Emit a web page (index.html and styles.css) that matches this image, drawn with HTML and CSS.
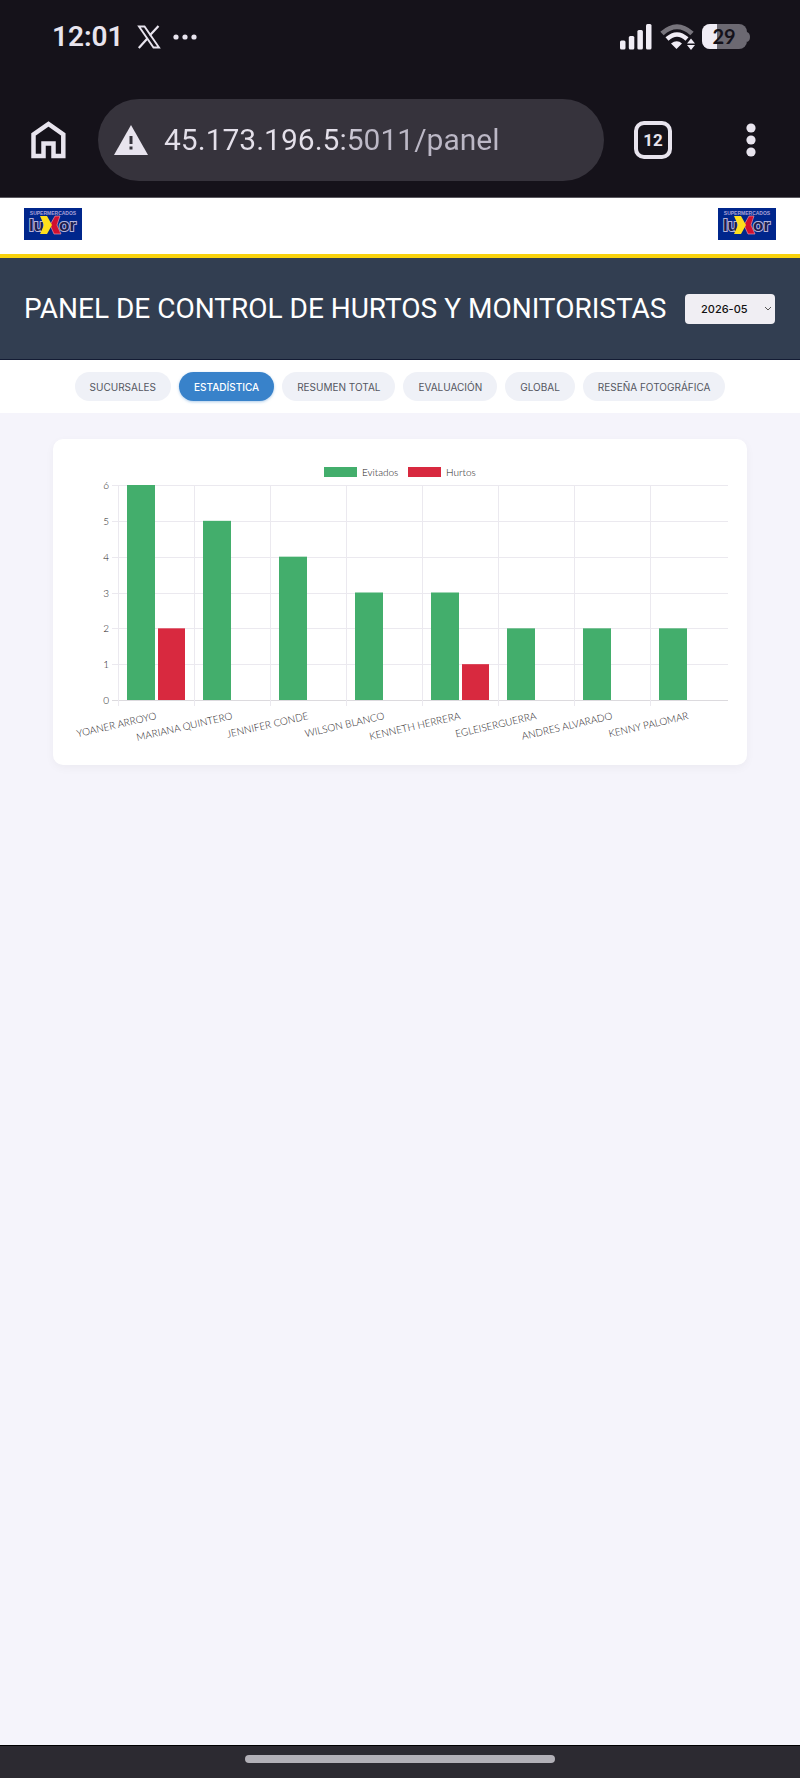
FILE: index.html
```
<!DOCTYPE html>
<html lang="es">
<head>
	<meta charset="UTF-8">
	<meta name="viewport" content="width=device-width, initial-scale=1">
	<title>Panel de control</title>
	<link rel="stylesheet" href="styles.css">
</head>
<body>
	<div class="status">
		<span class="clock">12:01</span>
		<svg class="x-icon" width="24" height="24" viewBox="0 0 24 24">
			<path fill="none" stroke="#e8e4ee" stroke-width="1.9" d="M2 1.500h5.500L22 22.500h-5.500z"/>
			<path fill="none" stroke="#e8e4ee" stroke-width="2.200" d="M21.500 1l-8.800 9.600M10.600 13.200L1.800 23"/>
		</svg>
		<svg width="24" height="6" viewBox="0 0 24 6">
			<g fill="#e8e4ee"><circle cx="3" cy="3" r="2.600"/><circle cx="12" cy="3" r="2.600"/><circle cx="21" cy="3" r="2.600"/></g>
		</svg>
		<svg class="signal" width="32" height="26" viewBox="0 0 32 26">
			<g fill="#f0ecf5">
				<rect y="16.500" width="5.500" height="9" rx="1.500"/><rect x="8.800" y="12" width="5.500" height="13.500" rx="1.500"/>
				<rect x="17.400" y="6" width="5.500" height="19.500" rx="1.500"/><rect x="26" y="0" width="5.500" height="25.500" rx="1.500"/>
			</g>
		</svg>
		<svg class="wifi" width="36" height="26" viewBox="0 0 36 26">
			<path d="M2 9.500Q17 -4 32 9.500" fill="none" stroke="#77747c" stroke-width="5"/>
			<path d="M7 15Q17 6 27 15" fill="none" stroke="#f0ecf5" stroke-width="4.500"/>
			<path d="M11 19.500q6-4.500 11 0L16.500 25z" fill="#f0ecf5"/>
			<path d="M31 14.500l4 5h-8zM31 26l4-5h-8z" fill="#f0ecf5"/>
		</svg>
		<svg class="battery" width="48" height="26" viewBox="0 0 48 26">
			<clipPath id="cell"><rect width="45" height="25" rx="8"/></clipPath>
			<g clip-path="url(#cell)"><rect width="45" height="25" fill="#6c6972"/><rect width="15" height="25" fill="#f0ecf5"/></g>
			<path d="M45 8q3 1 3 5t-3 5z" fill="#6c6972"/>
			<text x="22" y="20" text-anchor="middle">29</text>
		</svg>
	</div>

	<div class="toolbar">
		<button class="icon-btn" aria-label="Inicio">
			<svg width="36" height="38" viewBox="0 0 36 38">
				<path d="M2.500 35V13.500L17.500 3l14.800 10.500V35H22.500V22.500h-10V35z" fill="none" stroke="#e8e4ee" stroke-width="4.500"/>
			</svg>
		</button>
		<label class="address">
			<svg width="34" height="30" viewBox="0 0 34 30">
				<path d="M17 0l17 30H0z" fill="#e8e4ee"/>
				<path d="M17 11v8M17 21.500v3" stroke="#35323b" stroke-width="3"/>
			</svg>
			<input type="text" value="45.173.196.5:5011/panel" aria-label="Dirección">
		</label>
		<button class="tabs-count" aria-label="Pestañas">12</button>
		<button class="icon-btn menu" aria-label="Menú">
			<svg width="10" height="34" viewBox="0 0 10 34">
				<g fill="#e8e4ee"><circle cx="5" cy="5" r="4.600"/><circle cx="5" cy="17" r="4.600"/><circle cx="5" cy="29" r="4.600"/></g>
			</svg>
		</button>
	</div>

	<div class="brand">
		<svg class="logo" viewBox="0 0 58 32">
			<rect width="58" height="32" fill="#00268c"/>
			<text x="29" y="7" class="logo-small" text-anchor="middle">SUPERMERCADOS</text>
			<text x="5" y="23" class="logo-big">lu</text>
			<text x="52" y="23" class="logo-big" text-anchor="end">or</text>
			<path d="M36 8h-5l-5 9 4 9h7l-4-9z" fill="#d01030" stroke="#f3a9b8" stroke-width=".6"/>
			<path d="M16 8h7l5 9-5 9h-7l4-9z" fill="#ffdf1c"/>
		</svg>
		<svg class="logo" viewBox="0 0 58 32">
			<rect width="58" height="32" fill="#00268c"/>
			<text x="29" y="7" class="logo-small" text-anchor="middle">SUPERMERCADOS</text>
			<text x="5" y="23" class="logo-big">lu</text>
			<text x="52" y="23" class="logo-big" text-anchor="end">or</text>
			<path d="M36 8h-5l-5 9 4 9h7l-4-9z" fill="#d01030" stroke="#f3a9b8" stroke-width=".6"/>
			<path d="M16 8h7l5 9-5 9h-7l4-9z" fill="#ffdf1c"/>
		</svg>
	</div>

	<header class="title-bar">
		<h1>PANEL DE CONTROL DE HURTOS Y MONITORISTAS</h1>
		<div class="month">
			<select aria-label="Mes"><option>2026-05</option></select>
			<svg width="8" height="6" viewBox="0 0 8 6"><path d="M1 1l3 3 3-3" fill="none" stroke="#555" stroke-width="1"/></svg>
		</div>
	</header>

	<nav class="nav">
		<button>SUCURSALES</button>
		<button class="active">ESTADÍSTICA</button>
		<button>RESUMEN TOTAL</button>
		<button>EVALUACIÓN</button>
		<button>GLOBAL</button>
		<button>RESEÑA FOTOGRÁFICA</button>
	</nav>

	<main>
		<section class="card">
			<svg id="chart" viewBox="0 0 654 286" role="img" aria-label="Evitados y hurtos por monitorista"></svg>
		</section>
	</main>

	<div class="gesture"><span></span></div>

<script>
	var data = [
		['YOANER ARROYO', 6, 2],
		['MARIANA QUINTERO', 5, 0],
		['JENNIFER CONDE', 4, 0],
		['WILSON BLANCO', 3, 0],
		['KENNETH HERRERA', 3, 1],
		['EGLEISERGUERRA', 2, 0],
		['ANDRES ALVARADO', 2, 0],
		['KENNY PALOMAR', 2, 0]
	];
	var left = 45, right = 655, top0 = 26, bottom = 241, max = 6;
	var step = 76;
	var unit = (bottom - top0) / max;
	var out = '';

	// leyenda
	out += '<rect class="green" x="251" y="8" width="33" height="10"/><text x="289" y="17">Evitados</text>';
	out += '<rect class="red" x="335" y="8" width="33" height="10"/><text x="373" y="17">Hurtos</text>';

	// eje y
	for (var i = 0; i <= max; i++) {
		var y = Math.round(bottom - i * unit);
		out += '<path class="' + (i ? 'grid' : 'grid base') + '" d="M' + (left - 6) + ' ' + (y + 0.5) + 'H' + right + '"/>';
		out += '<text x="36" y="' + (y + 4) + '" text-anchor="end">' + i + '</text>';
	}

	// barras y nombres
	data.forEach(function (row, n) {
		var x = left + n * step;
		out += '<path class="grid" d="M' + (x + 0.5) + ' ' + top0 + 'V' + (bottom + 6) + '"/>';
		out += '<rect class="green" x="' + (x + 9) + '" y="' + (bottom - row[1] * unit) + '" width="28" height="' + row[1] * unit + '"/>';
		out += '<rect class="red" x="' + (x + 40) + '" y="' + (bottom - row[2] * unit) + '" width="27" height="' + row[2] * unit + '"/>';
		out += '<text text-anchor="end" transform="translate(' + (x + 39) + ' 260) rotate(-13)">' + row[0] + '</text>';
	});
	document.getElementById('chart').innerHTML = out;
</script>
</body>
</html>
```
FILE: styles.css
```
* {
	box-sizing: border-box;
}
body {
	margin: 0;
	min-height: 100vh;
	display: flex;
	flex-direction: column;
	background: #f5f4fb;
	font-family: Lato, "Open Sans", sans-serif;
}
button, input, select {
	font-family: inherit;
	border: 0;
	padding: 0;
}
svg {
	display: block;
	flex: none;
}

/* barra de estado */
.status {
	display: flex;
	align-items: center;
	height: 74px;
	padding: 0 50px 0 52px;
	background: #15121a;
}
.clock {
	font-family: Roboto, sans-serif;
	font-size: 28px;
	font-weight: 600;
	line-height: 40px;
	color: #e8e4ee;
}
.x-icon {
	margin: 0 12px 0 13px;
}
.signal {
	margin-left: auto;
}
.wifi {
	margin: 0 6px 0 8px;
}
.battery text {
	font-size: 20px;
	font-weight: 700;
	fill: #15121a;
}

/* navegador */
.toolbar {
	display: flex;
	align-items: center;
	height: 124px;
	padding: 8px 44px 0 31px;
	background: #15121a;
	border-bottom: 1px solid #5b5960;
}
.icon-btn {
	background: none;
}
.address {
	flex: 1;
	display: flex;
	align-items: center;
	gap: 16px;
	min-width: 0;
	height: 82px;
	margin: 0 30px 0 31px;
	padding: 0 20px 0 16px;
	border-radius: 41px;
	background: #36333c;
}
.address input {
	flex: 1;
	min-width: 0;
	height: 48px;
	font-family: Roboto, sans-serif;
	font-size: 30px;
	color: transparent;
	background: linear-gradient(90deg, #e4e0ea 170px, #bcb8c6 200px);
	-webkit-background-clip: text;
	background-clip: text;
}
.tabs-count {
	width: 38px;
	height: 38px;
	border: 4px solid #e8e4ee;
	border-radius: 10px;
	background: none;
	color: #e8e4ee;
	font-family: Roboto, sans-serif;
	font-size: 17px;
	font-weight: 700;
}
.menu {
	margin-left: 74px;
}

.brand {
	display: flex;
	justify-content: space-between;
	height: 60px;
	padding: 10px 24px;
	background: #fff;
	border-bottom: 4px solid #f8d20c;
}
.logo {
	width: 58px;
	height: 32px;
}
.logo-small {
	font: 700 5px "Liberation Sans", sans-serif;
	fill: #a9a0d8;
}
.logo-big {
	font: 700 17px "Liberation Sans", sans-serif;
	fill: #1a1c4c;
	stroke: #b5b3da;
	stroke-width: 2px;
	paint-order: stroke;
}

.title-bar {
	display: flex;
	align-items: center;
	justify-content: space-between;
	height: 102px;
	padding: 0 25px 0 24px;
	background: #323e51;
	border-bottom: 1px solid #141c34;
}
.title-bar h1 {
	margin: 0;
	font-family: Roboto, sans-serif;
	font-size: 28px;
	font-weight: 400;
	line-height: 36px;
	color: #fff;
	white-space: nowrap;
}
.month {
	position: relative;
}
.month select {
	display: block;
	width: 90px;
	height: 30px;
	padding: 0 16px;
	border-radius: 4px;
	background: #f0eef3;
	color: #111;
	font-family: Inter, sans-serif;
	font-size: 11px;
	font-weight: 500;
	appearance: none;
}
.month svg {
	position: absolute;
	top: 12px;
	right: 3px;
	pointer-events: none;
}

.nav {
	display: flex;
	justify-content: center;
	gap: 8px;
	padding: 12px 0;
	background: #fff;
}
.nav button {
	height: 29px;
	padding: 0 15px;
	border-radius: 15px;
	background: #eff1f7;
	color: #54565f;
	font-family: Inter, sans-serif;
	font-size: 10px;
	font-weight: 400;
}
.nav .active {
	background: #3882ca;
	color: #fff;
	font-weight: 500;
	box-shadow: 0 1px 3px #3882ca66;
}

main {
	flex: 1;
	padding: 26px 53px;
}
.card {
	padding: 20px;
	border-radius: 10px;
	background: #fff;
	box-shadow: 0 3px 10px #0000000a;
}
#chart {
	width: 100%;
	overflow: visible;
}
#chart text {
	font-size: 10px;
	font-weight: 300;
	fill: #1c1822;
}
.green {
	fill: #43ae6c;
}
.red {
	fill: #d8293f;
}
.grid {
	stroke: #ebe9ef;
}
.base {
	stroke: #dcdade;
}

.gesture {
	display: flex;
	justify-content: center;
	height: 33px;
	padding-top: 9px;
	background: #2c2a31;
	border-top: 1px solid #000;
}
.gesture span {
	width: 310px;
	height: 8px;
	border-radius: 4px;
	background: #b2b0b7;
}
```
